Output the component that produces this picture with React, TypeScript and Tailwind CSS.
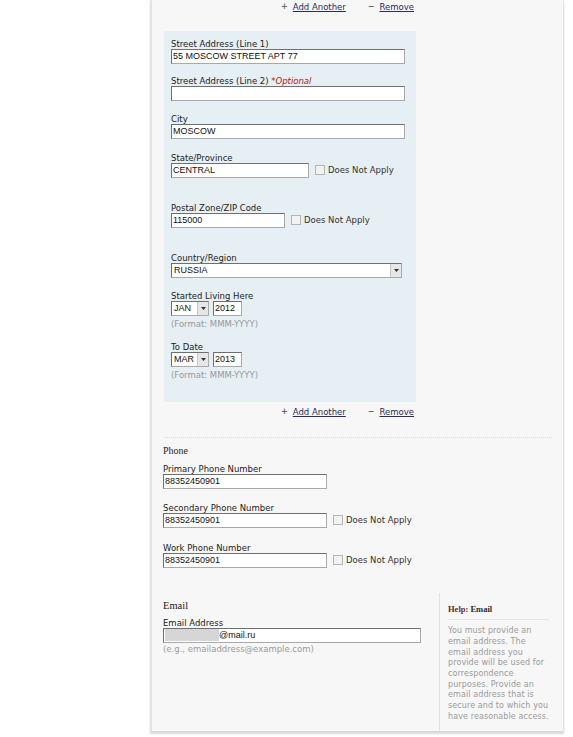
import React from "react";

const label = "block text-[8.5px] leading-[10px] text-[#222]";
const input =
  "h-[15px] border border-[#a9a9a9] border-t-[#6f6f6f] border-l-[#6f6f6f] bg-white px-[1px] text-[9px] leading-[13px] text-[#111]";
const hint = "block text-[8.5px] leading-[10px] text-[#9a9a9a]";
const sans = { fontFamily: "'DejaVu Sans', Verdana, sans-serif" };
const arial = { fontFamily: "'Liberation Sans', Arial, sans-serif" };
const serif = { fontFamily: "'Liberation Serif', 'Times New Roman', serif" };

function TextBox({ value, w }: { value: string; w: string }) {
  return (
    <div className={`${input} ${w}`} style={arial}>
      {value}
    </div>
  );
}

function Check() {
  return (
    <span className="flex items-center gap-[2px] text-[8.5px] text-[#333]">
      <span className="inline-block h-[10px] w-[10px] border border-[#b5b5b5] bg-[#f2f2f2]" />
      <span className="ml-[1px]">Does Not Apply</span>
    </span>
  );
}

function Arrow() {
  return (
    <span className="flex h-[13px] w-[11px] items-center justify-center border-l border-[#c8c8c8] bg-[#e6e6e6]">
      <svg width="5" height="3" viewBox="0 0 5 3">
        <path d="M0 0h5L2.5 3z" fill="#333" />
      </svg>
    </span>
  );
}

function Select({ value, w }: { value: string; w: string }) {
  return (
    <div className={`${input} ${w} flex items-center justify-between !px-0`} style={arial}>
      <span className="pl-[2px]">{value}</span>
      <Arrow />
    </div>
  );
}

function Links() {
  return (
    <div className="flex justify-end gap-[22px] pr-[4px] text-[8.5px] text-[#2b2b5a]">
      <span className="flex items-center gap-[5px]">
        <span className="text-[8px] font-bold leading-none text-[#666]">+</span>
        <span className="underline">Add Another</span>
      </span>
      <span className="flex items-center gap-[5px]">
        <span className="text-[8px] font-bold leading-none text-[#666]">−</span>
        <span className="underline">Remove</span>
      </span>
    </div>
  );
}

export default function App() {
  return (
    <div className="min-h-[737px] bg-white" style={sans}>
      <div className="ml-[150px] w-[414px] border-l-2 border-r border-[#e4e4e4] bg-[#f7f7f7] shadow-[0_3px_2px_#d8d8d8]">
        <div className="w-[266px] pt-[1px]">
          <Links />
        </div>

        <div className="ml-[12px] mt-[17px] h-[371px] w-[252px] bg-[#e6eff3] px-[7px] pt-[8px]">
          <span className={label}>Street Address (Line 1)</span>
          <TextBox value="55 MOSCOW STREET APT 77" w="w-[234px]" />

          <span className={`${label} mt-[12px]`}>
            Street Address (Line 2){" "}
            <i className="text-[#b02020]">*Optional</i>
          </span>
          <TextBox value="" w="w-[234px]" />

          <span className={`${label} mt-[13px]`}>City</span>
          <TextBox value="MOSCOW" w="w-[234px]" />

          <span className={`${label} mt-[14px]`}>State/Province</span>
          <div className="flex items-center gap-[6px]">
            <TextBox value="CENTRAL" w="w-[138px]" />
            <Check />
          </div>

          <span className={`${label} mt-[25px]`}>Postal Zone/ZIP Code</span>
          <div className="flex items-center gap-[6px]">
            <TextBox value="115000" w="w-[114px]" />
            <Check />
          </div>

          <span className={`${label} mt-[25px]`}>Country/Region</span>
          <Select value="RUSSIA" w="w-[231px]" />

          <span className={`${label} mt-[13px]`}>Started Living Here</span>
          <div className="flex gap-[4px]">
            <Select value="JAN" w="w-[38px]" />
            <TextBox value="2012" w="w-[29px]" />
          </div>
          <span className={`${hint} mt-[3px]`}>(Format: MMM-YYYY)</span>

          <span className={`${label} mt-[13px]`}>To Date</span>
          <div className="flex gap-[4px]">
            <Select value="MAR" w="w-[38px]" />
            <TextBox value="2013" w="w-[29px]" />
          </div>
          <span className={`${hint} mt-[3px]`}>(Format: MMM-YYYY)</span>
        </div>

        <div className="mt-[4px] w-[266px]">
          <Links />
        </div>

        <div className="ml-[12px] mt-[18px] w-[388px] border-t border-dotted border-[#dcdcdc]" />

        <div className="px-[11px]">
          <h3 className="mt-[6px] text-[10px] leading-[13px] text-[#222]" style={serif}>
            Phone
          </h3>
          <span className={`${label} mt-[7px]`}>Primary Phone Number</span>
          <TextBox value="88352450901" w="w-[164px]" />

          <span className={`${label} mt-[14px]`}>Secondary Phone Number</span>
          <div className="flex items-center gap-[6px]">
            <TextBox value="88352450901" w="w-[164px]" />
            <Check />
          </div>

          <span className={`${label} mt-[15px]`}>Work Phone Number</span>
          <div className="flex items-center gap-[6px]">
            <TextBox value="88352450901" w="w-[164px]" />
            <Check />
          </div>
        </div>

        <div className="mt-[24px] flex pl-[11px]">
          <div className="w-[276px] pt-[7px]">
            <h3 className="text-[10.5px] leading-[13px] text-[#222]" style={serif}>
              Email
            </h3>
            <span className={`${label} mt-[6px]`}>Email Address</span>
            <div className={`${input} w-[258px] flex items-center`} style={arial}>
              <span className="h-[12px] w-[54px] bg-[#d6d6d6]" />
              <span>@mail.ru</span>
            </div>
            <span className={`${hint} mt-[1px]`}>(e.g., emailaddress@example.com)</span>
          </div>
          <div className="mt-[1px] h-[138px] w-[116px] border-l border-[#e2e2e2] pl-[8px] pr-[6px] pt-[10px]">
            <div className="border-b border-[#e6e6e6] pb-[4px] text-[8.5px] font-bold text-[#2a2a2a]" style={serif}>
              <span className="text-[#6b2a1a]">Help:</span> Email
            </div>
            <p className="mt-[6px] text-[8px] leading-[10.7px] tracking-[0.1px] text-[#9a9a9a]">
              You must provide an email address. The email address you provide will be used for correspondence purposes. Provide an email address that is secure and to which you have reasonable access.
            </p>
          </div>
        </div>
      </div>
    </div>
  );
}
